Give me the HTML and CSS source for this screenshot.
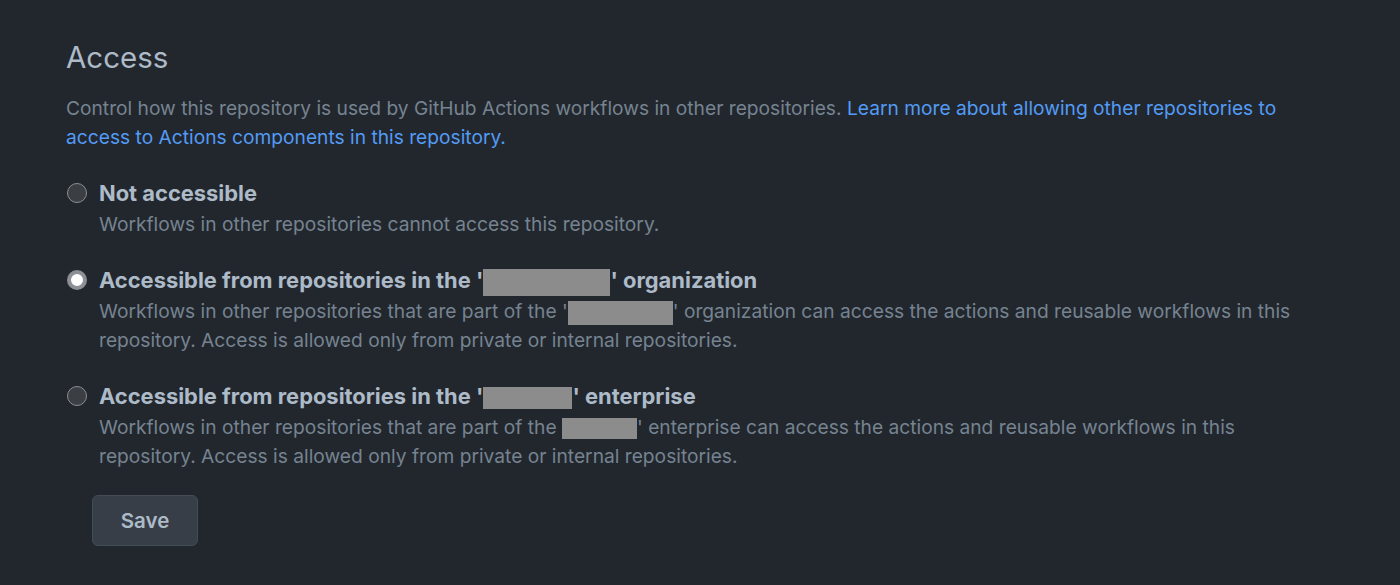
FILE: index.html
```html
<!DOCTYPE html>
<html lang="en">
  <head>
    <meta charset="UTF-8" />
    <title>Access</title>
    <link rel="stylesheet" href="styles.css">
  </head>
  <body>
    <div class="settings">
      <h2 class="title">Access</h2>
      <p class="lead">
        Control how this repository is used by GitHub Actions workflows in other repositories.
        <a href="#" class="link">Learn more about allowing other repositories to access to Actions components in this repository.</a>
      </p>

      <div class="options">
        <label class="option">
          <span class="radio"></span>
          <span class="option-body">
            <span class="option-title">Not accessible</span>
            <span class="option-desc">Workflows in other repositories cannot access this repository.</span>
          </span>
        </label>

        <label class="option">
          <span class="radio checked"></span>
          <span class="option-body">
            <span class="option-title">Accessible from repositories in the '<span class="redact redact-org"></span>' organization</span>
            <span class="option-desc">Workflows in other repositories that are part of the '<span class="redact redact-org-sm"></span>' organization can access the actions and reusable workflows in this repository. Access is allowed only from private or internal repositories.</span>
          </span>
        </label>

        <label class="option">
          <span class="radio"></span>
          <span class="option-body">
            <span class="option-title">Accessible from repositories in the '<span class="redact redact-ent"></span>' enterprise</span>
            <span class="option-desc">Workflows in other repositories that are part of the <span class="redact redact-ent-sm"></span>' enterprise can access the actions and reusable workflows in this repository. Access is allowed only from private or internal repositories.</span>
          </span>
        </label>
      </div>

      <button class="button">Save</button>
    </div>
  </body>
</html>
```

FILE: styles.css
```css
body {
  margin: 0;
  padding: 0;
  background-color: #22272e;
  font-family: Inter, "Liberation Sans", sans-serif;
  color: #adbac7;
}

.settings {
  padding: 37px 66px 0 66px;
  max-width: 1240px;
}

.title {
  margin: 0 0 17px;
  font-size: 29.5px;
  font-weight: normal;
  line-height: 40px;
  color: #adbac7;
}

.lead {
  margin: 0 0 25px;
  font-size: 19.2px;
  line-height: 29px;
  color: #768390;
}

.link {
  color: #539bf5;
  text-decoration: none;
}

.options {
  display: flex;
  flex-direction: column;
  gap: 25px;
}

.option {
  display: flex;
  gap: 12px;
  align-items: flex-start;
}

.radio {
  flex: none;
  width: 18px;
  height: 18px;
  margin-top: 6px;
  margin-left: 1px;
  border-radius: 50%;
  border: 1px solid #8b8f94;
  background: #3b3f44;
}

.radio.checked {
  width: 12px;
  height: 12px;
  border: 4px solid #8d9196;
  background: #ffffff;
}

.option-body {
  display: flex;
  flex-direction: column;
}

.option-title {
  font-size: 21.9px;
  font-weight: 700;
  line-height: 33px;
  color: #adbac7;
}

.option-desc {
  font-size: 19.2px;
  line-height: 29px;
  color: #768390;
}

.redact {
  display: inline-block;
  background: #8c8c8c;
  vertical-align: middle;
}

.redact-org {
  width: 127px;
  height: 27px;
}

.redact-org-sm {
  width: 105px;
  height: 24px;
}

.redact-ent {
  width: 89px;
  height: 22px;
}

.redact-ent-sm {
  width: 75px;
  height: 21px;
}

.button {
  display: block;
  margin: 24px 0 0 26px;
  width: 106px;
  height: 51px;
  border-radius: 6px;
  border: 1px solid #444c56;
  background: #373e47;
  color: #adbac7;
  font-family: inherit;
  font-size: 20.5px;
  font-weight: 600;
}
```
